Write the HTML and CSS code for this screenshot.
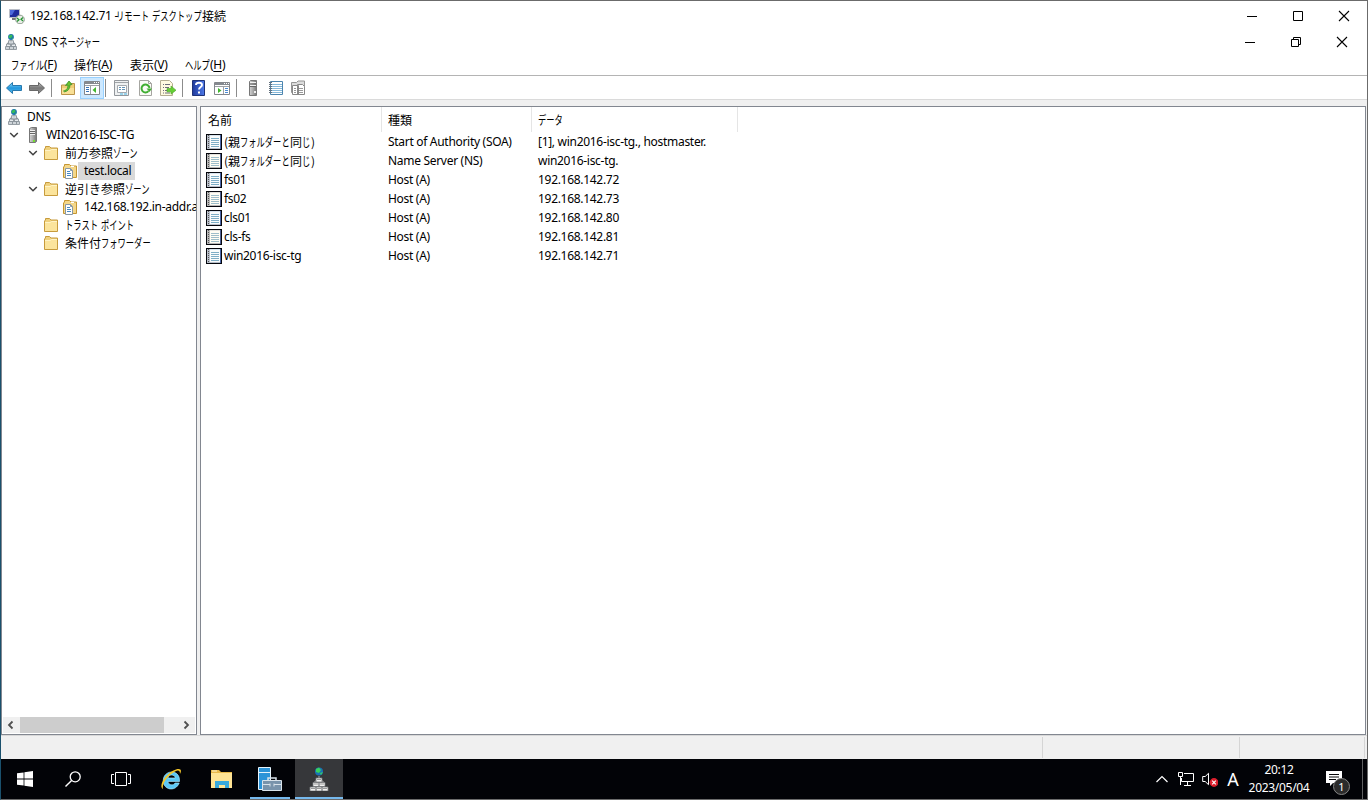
FILE: index.html
```html
<!DOCTYPE html>
<html lang="ja">
<head>
<meta charset="utf-8">
<title>192.168.142.71 - リモート デスクトップ接続</title>
<link rel="stylesheet" href="styles.css">
</head>
<body>
<svg class="defs" aria-hidden="true">
  <defs>
    <linearGradient id="gBlue" x2="0" y2="1"><stop stop-color="#8fdcfb"/><stop offset=".5" stop-color="#2196dc"/><stop offset="1" stop-color="#56bdf0"/></linearGradient>
    <linearGradient id="gGray" x2="0" y2="1"><stop stop-color="#c4c4c4"/><stop offset=".5" stop-color="#777"/><stop offset="1" stop-color="#999"/></linearGradient>
    <linearGradient id="gServer"><stop stop-color="#d4d4d4"/><stop offset=".5" stop-color="#a9a9a9"/><stop offset="1" stop-color="#747474"/></linearGradient>
    <linearGradient id="gHelp" x2="1" y2="0"><stop stop-color="#203a9c"/><stop offset="1" stop-color="#4d79e8"/></linearGradient>
    <symbol id="dns" viewBox="0 0 16 16">
      <circle cx="8" cy="3" r="2.9" fill="#1a70b0"/><path d="M6 1.5l3-1 .5 2-2 2-2-1zM9 4l1.5-.5L9 5.6z" fill="#35bd59"/>
      <path d="M8 6v3M4.500 11V9h7v2" fill="none" stroke="#8b9297"/>
      <g fill="#e7ebee" stroke="#8b949b" stroke-width=".9"><path d="M5.500 6.700h5v3.300h-5zM3.500 10h4v2.500h-4zM8.500 10h4v2.500h-4zM2.500 12.500h4v3h-4zM6.500 12.500h4v3h-4zM10.500 12.500h3v3h-3z"/></g>
      <path d="M6.500 8h3M3 14h3M7 14h3M11 14h2" stroke="#a7afb5" stroke-width=".8"/>
    </symbol>
    <symbol id="server" viewBox="0 0 16 16">
      <path d="M4.500 1.500l2-1h5v14l-1 1h-6z" fill="url(#gServer)" stroke="#777"/><path d="M5 3.500h5M5 5.500h5M5 7.500h5" stroke="#eee"/><path d="M5 4.500h5M5 6.500h5" stroke="#666"/><path d="M8 13h2v2H8z" fill="#74df32"/>
    </symbol>
    <symbol id="folder" viewBox="0 0 16 16">
      <path d="M2.500 3V1.500h4L8 3h6.500v11.500h-13V4z" fill="#efd07c" stroke="#c79b3c"/><path d="M2 5h5l1.500-1H14v10H2z" fill="#fbe49c"/><path d="M2 5.500h5l1.500-1H14" fill="none" stroke="#fff3c5"/>
    </symbol>
    <symbol id="zone" viewBox="0 0 16 16">
      <path d="M2.500 3V1.500h5L9 3h5.500v11.500h-13V4z" fill="#f4d78a" stroke="#c59632"/><path d="M9 3h3v1H9z" fill="#fff"/>
      <path d="M3.500 5.500h5l2 2v8h-7z" fill="#fff" stroke="#8998a5"/><path d="M5 8.500h3M5 10.500h4M5 12.500h4" stroke="#4689c5"/><path d="M8.500 5.500v2h2" fill="none" stroke="#8998a5"/>
    </symbol>
    <symbol id="record" viewBox="0 0 16 16">
      <path d="M0 0h16v16H0z" fill="#05070d"/><path d="M1 1h13v14H1z" fill="#b8bfca"/><path d="M4 1h10v13H4z" fill="#fafcfc"/><path d="M14 1h1v14h-1z" fill="#4964a5"/>
      <path d="M2.500 1v14" stroke="#555" stroke-dasharray="1 1"/><path d="M5 4.500h8M5 6.500h8M5 8.500h8M5 10.500h8M5 12.500h8" stroke="#7eaec6"/><path d="M4 1.500h10" stroke="#d9e5ef"/>
    </symbol>
    <symbol id="record-cream" viewBox="0 0 16 16">
      <path d="M0 0h16v16H0z" fill="#05070d"/><path d="M1 1h13v14H1z" fill="#b8b8b8"/><path d="M4 1h10v13H4z" fill="#fffdf4"/><path d="M14 1h1v14h-1z" fill="#4d5e91"/>
      <path d="M2.500 1v14" stroke="#555" stroke-dasharray="1 1"/><path d="M5 4.500h8M5 6.500h8M5 8.500h8M5 10.500h8M5 12.500h8" stroke="#9dbdc9"/><path d="M4 1.500h10" stroke="#e4e4df"/>
    </symbol>
    <symbol id="open" viewBox="0 0 10 10"><path d="M1.200 3L5 6.800 8.800 3" fill="none" stroke="#404040" stroke-width="1.500"/></symbol>
    <symbol id="min" viewBox="0 0 12 12"><path d="M1 6.500h10" stroke="#000"/></symbol>
    <symbol id="close" viewBox="0 0 12 12"><path d="M1 1l10 10M11 1L1 11" stroke="#000" stroke-width="1.100"/></symbol>
  </defs>
</svg>

<div class="window">
  <header class="titlebar">
    <svg class="i16" viewBox="0 0 16 16"><path d="M.5 1.500h10v8H.500z" fill="#1f2b9c" stroke="#b9bdc6"/><path d="M1 2h5L3 7H1z" fill="#4b68dc"/><path d="M3 10h5v2H3z" fill="#777"/><circle cx="11" cy="11.500" r="4.300" fill="#e8eee6" stroke="#8e9a8e"/><path d="M8 10l2 1.800L8 13.500M14 9.500l-2 1.700 2 1.800" fill="none" stroke="#21922f" stroke-width="1.200"/></svg>
    <h1><span class="latin title-ip">192.168.142.71 -</span><span class="kana k4">リモート</span><span class="kana k6 word">デスクトップ</span><span>接続</span></h1>
    <div class="controls"><svg><use href="#min"/></svg><svg viewBox="0 0 12 12"><path d="M1.500 1.500h9v9h-9z" fill="none" stroke="#000"/></svg><svg><use href="#close"/></svg></div>
  </header>
  <div class="mdi">
    <svg class="i16"><use href="#dns"/></svg>
    <h2><span class="latin">DNS</span><span class="kana k6 word">マネージャー</span></h2>
    <div class="controls"><svg><use href="#min"/></svg><svg viewBox="0 0 12 12"><path d="M1.500 3.500h7v7h-7zM3.500 3V1.500h7v7H9" fill="none" stroke="#000"/></svg><svg><use href="#close"/></svg></div>
  </div>
  <nav class="menu">
    <span class="m1"><span class="kana k4">ファイル</span><span class="latin">(<u>F</u>)</span></span>
    <span class="m2">操作<span class="latin">(<u>A</u>)</span></span>
    <span class="m3">表示<span class="latin">(<u>V</u>)</span></span>
    <span class="m4"><span class="kana k3">ヘルプ</span><span class="latin">(<u>H</u>)</span></span>
  </nav>
  <div class="toolbar">
    <svg viewBox="0 0 16 16"><path d="M.5 8l6-5.500v3h9v5h-9v3z" fill="url(#gBlue)" stroke="#2878ad"/></svg>
    <svg viewBox="0 0 16 16"><path d="M15.500 8l-6-5.500v3h-9v5h9v3z" fill="url(#gGray)" stroke="#686868"/></svg>
    <i class="sep"></i>
    <svg viewBox="0 0 16 16"><path d="M1.500 5h5l1-1.500h7v11h-13z" fill="#efcd75" stroke="#bb944a"/><path d="M2 8h12v6H2z" fill="#f8df95"/><path d="M3.500 11C7 10 8 8 8 5L5.500 5.500 9 1l3 3.500-2 .3c0 4-2 6.500-5.500 7z" fill="#67c52f" stroke="#36912b" stroke-width=".8"/></svg>
    <span class="active"><svg viewBox="0 0 16 16"><path d="M.5 1.500h15v13H.500z" fill="#fff" stroke="#84878c"/><path d="M1 2h14v2H1z" fill="#85898f"/><path d="M10 2.500h1M12 2.500h1M14 2.500h1" stroke="#fff"/><path d="M1 5.500h14M6.500 6v8" stroke="#9da0a5"/><path d="M2 7.500h3M2 9.500h3M2 11.500h3" stroke="#3672b8"/><path d="M12 7v6L8.500 10z" fill="#42b62e"/></svg></span>
    <i class="sep"></i>
    <svg viewBox="0 0 16 16"><path d="M.5 .5h14v15H.500z" fill="#eef0f1" stroke="#92969b"/><path d="M1 2.500h13" stroke="#a0a4a8"/><path d="M3.500 5.500h9v7h-9z" fill="#fff" stroke="#a4a9ae"/><path d="M5 7.500h2M8 7.500h3M5 9.500h2M8 9.500h3" stroke="#6393b7"/><path d="M6 14h3M10 14h3" stroke="#45b5e4"/></svg>
    <svg viewBox="0 0 16 16"><path d="M1.500 .5h9l3 3v12h-12z" fill="#fbfbf7" stroke="#a5a5a0"/><path d="M10.500 .5v3h3" fill="none" stroke="#a5a5a0"/><path d="M10.500 11.200A4 4 0 1 1 11.500 8" fill="none" stroke="#40ae32" stroke-width="2"/><path d="M8.500 8.500h5.500l-2.500 3.500z" fill="#40ae32"/></svg>
    <svg viewBox="0 0 16 16"><path d="M.5 .5h9l3 3v12H.500z" fill="#fffae0" stroke="#b5ae92"/><path d="M3 4.500h1M5 4.500h5M3 7.500h1M5 7.500h4M3 10.500h1M5 10.500h3M3 13h1M5 13h5" stroke="#6d6d79"/><path d="M7 8.500h4V6l5 4.200-5 4V11.800H7z" fill="#66cf34" stroke="#49a52c" stroke-width=".6"/></svg>
    <i class="sep"></i>
    <svg viewBox="0 0 16 16"><path d="M1.500 .5h12v15h-12z" fill="url(#gHelp)" stroke="#1f3277"/><path d="M5 5c0-3 6-3 6 0 0 2-3 2-3 4.500" fill="none" stroke="#fff" stroke-width="1.900"/><path d="M7 11.500h2v2H7z" fill="#fff"/></svg>
    <svg viewBox="0 0 16 16"><path d="M.5 2.500h15v12H.500z" fill="#fff" stroke="#84878c"/><path d="M1 3h14v2H1z" fill="#85898f"/><path d="M10 3.500h1M12 3.500h1M14 3.500h1" stroke="#fff"/><path d="M1 6.500h14M9.500 7v7" stroke="#9da0a5"/><path d="M11 8.500h3M11 10.500h3M11 12.500h3" stroke="#4b8bd2"/><path d="M4 8v5l3.500-2.500z" fill="#42b62e"/></svg>
    <i class="sep"></i>
    <svg viewBox="0 0 16 16"><path d="M3.500 1.500l1-1h6v15h-7z" fill="url(#gServer)" stroke="#777"/><path d="M4 2.500h6M4 5.500h6" stroke="#f0f0f0"/><path d="M4 4h6M4 6.500h6" stroke="#666"/><path d="M8 11h2v2H8z" fill="#eee"/></svg>
    <svg viewBox="0 0 16 16"><path d="M2.500 1.500h12v13h-12z" fill="#fff" stroke="#4b84ae"/><path d="M4 4.500h10M4 6.500h10M4 8.500h10M4 10.500h10M4 12.500h10" stroke="#86b9da"/><path d="M1 2.500h3M1 4.500h3M1 6.500h3M1 8.500h3M1 10.500h3M1 12.500h3" stroke="#64717d"/></svg>
    <svg viewBox="0 0 16 16"><path d="M1.500 2.500h5L8 1h6.500v11.500h-13z" fill="#dcdcdc" stroke="#959595"/><path d="M2.500 5.500h6v9h-6zM7.500 4.500h5l2 2v8h-7z" fill="#fff" stroke="#888"/><path d="M4 8.500h2M4 10.500h2M4 12.500h2M9 8.500h4M9 10.500h4M9 12.500h4" stroke="#999"/></svg>
  </div>

  <main class="workspace">
    <aside class="panel tree">
      <ul>
        <li class="root"><svg class="i16"><use href="#dns"/></svg><span class="latin">DNS</span></li>
        <li class="lv0"><svg class="tw"><use href="#open"/></svg><svg class="i16"><use href="#server"/></svg><span class="latin srv">WIN2016-ISC-TG</span></li>
        <li class="lv1"><svg class="tw"><use href="#open"/></svg><svg class="i16"><use href="#folder"/></svg><span>前方参照</span><span class="kana k3">ゾーン</span></li>
        <li class="lv2"><svg class="i16"><use href="#zone"/></svg><span class="latin sel">test.local</span></li>
        <li class="lv1"><svg class="tw"><use href="#open"/></svg><svg class="i16"><use href="#folder"/></svg><span class="rev">逆引き参照</span><span class="kana k3">ゾーン</span></li>
        <li class="lv2"><svg class="i16"><use href="#zone"/></svg><span class="latin addr">142.168.192.in-addr.arpa</span></li>
        <li class="lv1"><i class="tw"></i><svg class="i16"><use href="#folder"/></svg><span class="kana k4">トラスト</span><span class="kana k4 word">ポイント</span></li>
        <li class="lv1"><i class="tw"></i><svg class="i16"><use href="#folder"/></svg><span>条件付</span><span class="kana k6">フォワーダー</span></li>
      </ul>
      <div class="scroll"><svg viewBox="0 0 10 10"><path d="M6.500 1.500L3 5l3.500 3.500" fill="none" stroke="#505050" stroke-width="1.800"/></svg><i class="thumb"></i><svg viewBox="0 0 10 10"><path d="M3.500 1.500L7 5 3.500 8.500" fill="none" stroke="#505050" stroke-width="1.800"/></svg></div>
    </aside>
    <section class="panel list">
      <div class="row head"><span>名前</span><span>種類</span><span><span class="kana k3">データ</span></span></div>
      <div class="row"><span><svg class="i16"><use href="#record"/></svg><b>(親<span class="kana k6">フォルダーと</span>同<span class="kana k1">じ</span>)</b></span><span class="latin soa">Start of Authority (SOA)</span><span class="latin host">[1], win2016-isc-tg., hostmaster.</span></div>
      <div class="row"><span><svg class="i16"><use href="#record-cream"/></svg><b>(親<span class="kana k6">フォルダーと</span>同<span class="kana k1">じ</span>)</b></span><span class="latin">Name Server (NS)</span><span class="latin host">win2016-isc-tg.</span></div>
      <div class="row"><span><svg class="i16"><use href="#record"/></svg><b class="latin">fs01</b></span><span class="latin">Host (A)</span><span class="latin ip">192.168.142.72</span></div>
      <div class="row"><span><svg class="i16"><use href="#record-cream"/></svg><b class="latin">fs02</b></span><span class="latin">Host (A)</span><span class="latin ip">192.168.142.73</span></div>
      <div class="row"><span><svg class="i16"><use href="#record"/></svg><b class="latin">cls01</b></span><span class="latin">Host (A)</span><span class="latin ip">192.168.142.80</span></div>
      <div class="row"><span><svg class="i16"><use href="#record-cream"/></svg><b class="latin">cls-fs</b></span><span class="latin">Host (A)</span><span class="latin ip">192.168.142.81</span></div>
      <div class="row"><span><svg class="i16"><use href="#record"/></svg><b class="latin">win2016-isc-tg</b></span><span class="latin">Host (A)</span><span class="latin ip">192.168.142.71</span></div>
    </section>
  </main>
  <div class="status"><i></i><i></i><i></i></div>

  <footer class="taskbar">
    <div class="apps">
      <span><svg class="i16" viewBox="0 0 16 16"><path d="M0 2.300L6.600 1.400v6.200H0zM7.400 1.300L16 0v7.600H7.400zM0 8.400h6.600v6.200L0 13.700zM7.400 8.400H16V16l-8.600-1.300z" fill="#fff"/></svg></span>
      <span><svg class="i16" viewBox="0 0 16 16"><circle cx="10.200" cy="5.800" r="5" fill="none" stroke="#fff" stroke-width="1.300"/><path d="M6.600 9.400L.5 15.500" stroke="#fff" stroke-width="1.400"/></svg></span>
      <span><svg class="tv" viewBox="0 0 20 14"><path d="M4.500 .5h11v13h-11zM3 2.500H.500v9H3M17 2.500h2.500v9H17" fill="none" stroke="#fff"/></svg></span>
      <span><svg class="i24" viewBox="0 0 24 24"><path d="M20.500 14.500H9c.3 4 5.800 4.300 7 1.500h4.200C16.500 25.500 4 23 4.200 13.500 4.500 2.500 20.500 2 20.500 13zM9 11h7.300c-.5-4-6.800-4-7.300 0z" fill="#5cc8f5" stroke="#b2ecff" stroke-width=".6"/><path d="M4 22C-1 20 6 6 17 2.500c5-1.500 6 1 4 4.500 0-4-2-4-5-2.500C9 8 2.500 17 4 22z" fill="#f6c72a"/></svg></span>
      <span><svg class="i24" viewBox="0 0 24 24"><path d="M2 4V3h8l2 2h11v16H2z" fill="#e9b94b"/><path d="M2 6h21v15H2z" fill="#ffe495"/><path d="M3 4h5" stroke="#fff3cd"/><path d="M6 21v-7h14v7h-4v-3h-6v3z" fill="#38a9dc"/></svg></span>
      <span class="running"><svg class="i24" viewBox="0 0 24 24"><path d="M.5 .5h12v22H.500z" fill="#2c94d8" stroke="#e6f4fc"/><path d="M1 5.500h11" stroke="#e6f4fc"/><path d="M4.500 13.500h19v10h-19z" fill="#7893ab" stroke="#d8e2ea"/><path d="M10 13v-2h8v2" fill="none" stroke="#d8e2ea" stroke-width="1.500"/><path d="M5 17.500h7M16 17.500h7M12 16.500v3M16 16.500v3" stroke="#d8e2ea"/></svg></span>
      <span class="running current"><svg class="i24" viewBox="0 0 24 24"><circle cx="12" cy="4.500" r="4" fill="#1a72b5"/><path d="M9 2l3-1.500L14 3l-2 3-3-1zM13 6l3-1-2 3z" fill="#36d25d"/><path d="M12 9v3M8 16v-2h8v2" stroke="#aaa" fill="none"/><g fill="#f1f1f1" stroke="#77797c" stroke-width=".8"><path d="M9 11h6v4H9zM6 15.500h6v4H6zM12 15.500h6v4h-6zM3 20h6v4H3zM9 20h6v4H9zM15 20h6v4h-6z"/></g><path d="M10 12.500h4M7 17h4M13 17h4M4 21.500h4M10 21.500h4M16 21.500h4" stroke="#999"/></svg></span>
    </div>
    <div class="tray">
      <span><svg class="i16" viewBox="0 0 16 16"><path d="M2.500 11L8 5.500l5.500 5.500" fill="none" stroke="#fff" stroke-width="1.200"/></svg></span>
      <span><svg class="i16" viewBox="0 0 16 16"><path d="M6 2.500h9.500v8H3.500V7M.5 1.500h4v4h-4zM2.500 6v8M9.500 11v3M6 14.500h7" fill="none" stroke="#fff"/></svg></span>
      <span><svg class="i16 spk" viewBox="0 0 16 16"><path d="M.7 5.500h2.500L6.500 2.300v11.400L3.200 10.500H.700z" fill="none" stroke="#fff"/><circle cx="12" cy="11.500" r="4.400" fill="#dc1f2d"/><path d="M10.200 9.700l3.600 3.600M13.800 9.700l-3.600 3.600" stroke="#fff" stroke-width="1.200"/></svg></span>
      <span class="ime">A</span>
      <div class="clock"><div class="latin">20:12</div><div class="latin">2023/05/04</div></div>
      <span class="notice"><svg viewBox="0 0 16 16"><path d="M0 0h16v12h-9l-3 3v-3H0z" fill="#fff"/><path d="M3 3.500h10M3 6h10M3 8.500h7" stroke="#050507"/></svg><em>1</em></span>
      <span class="peek"></span>
    </div>
  </footer>
</div>
</body>
</html>
```
FILE: styles.css
```css
* { box-sizing: border-box; }
body {
  margin: 0;
  font: 12px/18px "Noto Sans CJK JP", sans-serif;
  color: #000;
}
h1, h2, ul { margin: 0; padding: 0; font: inherit; list-style: none; }
b, em { font-weight: 400; font-style: normal; }
svg { flex: none; display: block; }
.defs { position: absolute; width: 0; height: 0; }
.i16 { width: 16px; height: 16px; }
.i24 { width: 24px; height: 24px; }

.window {
  width: 1368px;
  height: 800px;
  display: grid;
  grid-template-rows: 29px 24px 22px 24px 635px 24px 40px;
  background: #fff;
  border: 1px solid #6b6b6b;
  border-left-color: #1a506c;
  overflow: hidden;
}

/* Latin and kana runs are set condensed, kanji keep the full width */
.latin { font-family: "Noto Sans", sans-serif; letter-spacing: -.3px; white-space: nowrap; }
.kana {
  display: inline-block;
  white-space: nowrap;
  transform: scaleX(.69);
  transform-origin: 0 50%;
  vertical-align: top;
}
.k1 { width: 9px; }
.k3 { width: 25px; }
.k4 { width: 33px; }
.k6 { width: 50px; }
.word { margin-left: 3px; }

.titlebar, .mdi { display: flex; align-items: center; }
.titlebar { padding-left: 8px; }
.titlebar h1 { display: flex; margin-left: 5px; }
.title-ip { width: 86px; letter-spacing: -.25px; }
.mdi { padding-left: 2px; }
.mdi h2 { display: flex; margin-left: 5px; }
.controls { display: flex; gap: 34px; margin-left: auto; margin-right: 17px; }
.mdi .controls { margin-right: 19px; }
.controls svg { width: 12px; height: 12px; }

.menu { display: flex; padding: 2px 0 0 10px; border-bottom: 1px solid #b4b4b4; }
.menu > span { display: flex; }
.m1 { width: 63px; }
.m2 { width: 56px; }
.m3 { width: 55px; }
.menu u { text-underline-offset: 2px; }

.toolbar {
  display: grid;
  grid-template-columns: 23px 22px 9px 24px 21px 9px 24px 22px 22px 9px 23px 22px 10px 22px 22px 16px;
  align-items: center;
  padding-left: 5px;
  border-bottom: 1px solid #dadada;
}
.toolbar svg { width: 16px; height: 16px; }
.sep { width: 1px; height: 18px; background: #8c8c8c; }
.active {
  width: 24px;
  height: 22px;
  margin-left: -4px;
  padding: 2px 3px;
  background: #cce8ff;
  border: 1px solid #99d1ff;
}

.workspace {
  display: grid;
  grid-template-columns: 196px 1166px;
  column-gap: 3px;
  padding-top: 6px;
  background: #f0f0f0;
}
.panel { background: #fff; border: 1px solid #828790; }
.tree { display: flex; flex-direction: column; justify-content: space-between; overflow: hidden; padding: 1px; }
.tree li { display: flex; height: 18px; align-items: center; white-space: nowrap; }
.root { padding-left: 3px; }
.root > span { margin-left: 5px; }
.lv0 { padding-left: 6px; }
.lv0 .i16 { margin: 0 5px 0 6px; }
.lv0 > span { margin-left: 0; }
.lv1 { padding-left: 25px; }
.lv1 .i16 { margin: 0 6px 0 5px; }
.lv2 { padding-left: 59px; }
.tw { width: 10px; height: 10px; flex: none; }
.lv2 .i16 { margin-right: 0; }
.sel { background: #d9d9d9; padding: 0 4px 0 6px; }
.addr { padding-left: 6px; }
.scroll { display: grid; grid-template-columns: 17px 144px 1fr 17px; align-items: center; height: 16px; background: #f0f0f0; }
.scroll svg { width: 10px; height: 10px; margin-left: 3px; }
.scroll svg:last-child { grid-column: 4; }
.thumb { height: 16px; background: #cdcdcd; }

.row {
  display: grid;
  grid-template-columns: 180px 150px 1fr;
  height: 19px;
  align-items: center;
  padding-left: 7px;
}
.row > span { white-space: nowrap; }
.row > span:first-child { display: flex; align-items: center; margin-left: -2px; }
.row b { margin-left: 2px; }
.head { height: 25px; grid-template-columns: 174px 150px 206px; }
.head > span { height: 25px; line-height: 25px; border-right: 1px solid #e5e5e5; }
.row.head > span:first-child { margin: 0; }
.head > span:not(:first-child) { padding-left: 6px; }

.status { display: flex; background: #f0f0f0; border-top: 1px solid #d8d8d8; padding-top: 1px; }
.status i { height: 21px; border-right: 1px solid #d5d5d5; }
.status i:nth-child(1) { width: 1042px; }
.status i:nth-child(2) { width: 197px; }
.status i:nth-child(3) { width: 125px; }

.taskbar { display: flex; justify-content: space-between; background: #020307; color: #fff; }
.apps { display: grid; grid-template-columns: 48px 48px 48px 52px 48px 50px 48px; }
.apps > span { display: flex; align-items: center; justify-content: center; }
.tv { width: 20px; height: 14px; }
.running { box-shadow: inset 0 -2px #76b9ed; }
.running:not(.current) { margin: 0 5px; }
.current { background: #36373a; }
.tray { display: grid; grid-template-columns: 24px 24px 24px 22px 70px 48px 5px; }
.tray > span { display: flex; align-items: center; justify-content: center; }
.ime { font: 18px "Noto Sans", sans-serif; }
.clock { text-align: center; padding-top: 2px; }
.notice { position: relative; }
.notice > svg { width: 16px; height: 16px; margin-right: 8px; }
.notice em {
  position: absolute;
  left: 19px;
  top: 19px;
  width: 17px;
  height: 17px;
  border: 1px solid #858585;
  border-radius: 50%;
  background: #2b2b2b;
  font: 11px/15px "Noto Sans", sans-serif;
  text-align: center;
}
.peek { border-left: 1px solid #5f6062; }
```
